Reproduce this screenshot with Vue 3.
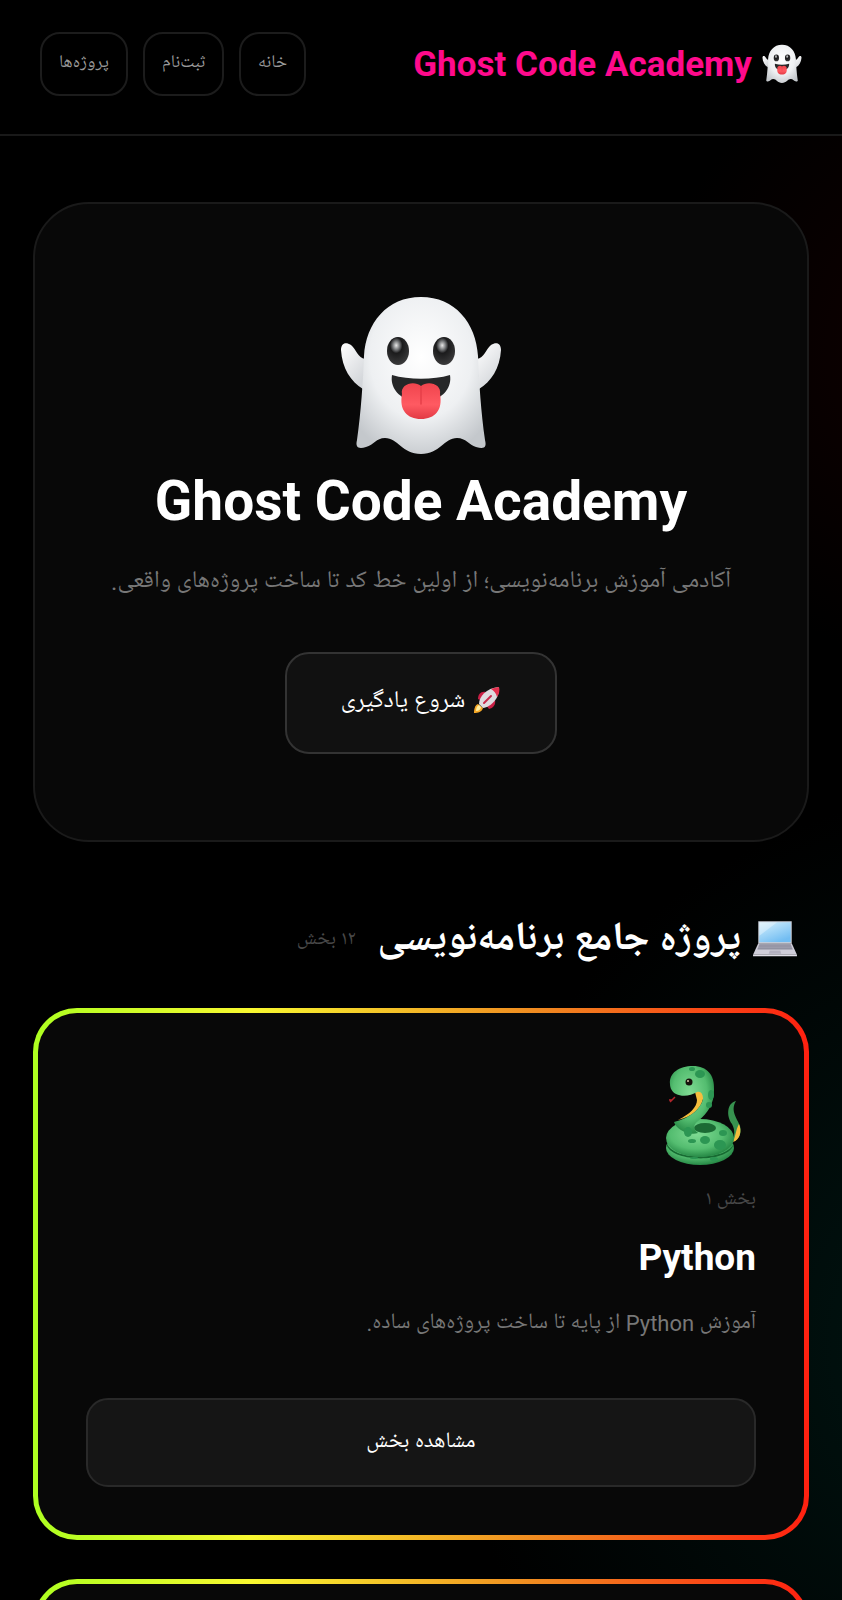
<template>
  <div
    class="page"
    dir="rtl"
    lang="fa"
  >
    <header class="topbar">
      <a
        href="#"
        class="brand"
      >
        <svg
          class="brand-icon"
          viewBox="0 0 164 160"
          aria-hidden="true"
        >
          <use href="#ghost" />
        </svg>
        <span>Ghost Code Academy</span>
      </a>
      <nav class="nav">
        <a
          v-for="link in links"
          :key="link"
          href="#"
          class="nav-link"
        >{{ link }}</a>
      </nav>
    </header>

    <main class="content">
      <section class="hero">
        <svg
          class="hero-icon"
          viewBox="0 0 164 160"
          aria-hidden="true"
        >
          <defs>
            <radialGradient
              id="ghost-body"
              cx="0.5"
              cy="0.38"
              r="0.66"
            >
              <stop
                offset="0"
                stop-color="#ffffff"
              />
              <stop
                offset="0.6"
                stop-color="#eef0f2"
              />
              <stop
                offset="1"
                stop-color="#c4c8cc"
              />
            </radialGradient>
            <linearGradient
              id="ghost-arm"
              x1="0"
              y1="0"
              x2="0.6"
              y2="1"
            >
              <stop
                offset="0"
                stop-color="#ffffff"
              />
              <stop
                offset="1"
                stop-color="#d3d6da"
              />
            </linearGradient>
            <radialGradient
              id="ghost-eye"
              cx="0.42"
              cy="0.3"
              r="0.7"
            >
              <stop
                offset="0"
                stop-color="#e8e8e8"
              />
              <stop
                offset="0.22"
                stop-color="#77797b"
              />
              <stop
                offset="0.4"
                stop-color="#1b1b1c"
              />
              <stop
                offset="1"
                stop-color="#3a3a3b"
              />
            </radialGradient>
            <linearGradient
              id="ghost-tongue"
              x1="0"
              y1="0"
              x2="0"
              y2="1"
            >
              <stop
                offset="0"
                stop-color="#f0444d"
              />
              <stop
                offset="0.6"
                stop-color="#ff5a62"
              />
              <stop
                offset="1"
                stop-color="#e23a44"
              />
            </linearGradient>
          </defs>
          <g id="ghost">
            <path
              d="M26 63C19 62 17 53 12 49C6 45 2 48 2 54C3 72 12 86 24 93Z"
              fill="url(#ghost-arm)"
            />
            <path
              d="M138 63C145 62 147 53 152 49C158 45 162 48 162 54C161 72 152 86 140 93Z"
              fill="url(#ghost-arm)"
            />
            <path
              d="M82 1C48 1 27 27 25 60C24 86 22 116 18 144C16 152 20 153 27 151C35 149 37 142 46 142C59 142 63 158 82 158C101 158 105 142 118 142C127 142 130 149 137 151C145 153 148 152 146 144C142 116 140 86 139 60C137 27 116 1 82 1Z"
              fill="url(#ghost-body)"
            />
            <ellipse
              cx="59"
              cy="55"
              rx="11"
              ry="14"
              fill="url(#ghost-eye)"
            />
            <ellipse
              cx="105"
              cy="55"
              rx="11"
              ry="14"
              fill="url(#ghost-eye)"
            />
            <path
              d="M53 79C70 84 94 84 111 79C113 91 105 101 92 105H72C59 101 51 91 53 79Z"
              fill="#262728"
            />
            <path
              d="M63 98C61 88 75 84 82 90C89 84 103 88 101 98C104 114 96 123 82 123C68 123 60 114 63 98Z"
              fill="url(#ghost-tongue)"
            />
            <path
              d="M82 91V108"
              stroke="#e63f49"
              stroke-width="1.5"
              stroke-linecap="round"
            />
          </g>
        </svg>
        <h1 class="hero-title">
          Ghost Code Academy
        </h1>
        <p class="hero-text">
          آکادمی آموزش برنامه‌نویسی؛ از اولین خط کد تا ساخت پروژه‌های واقعی.
        </p>
        <button
          type="button"
          class="start-button"
        >
          <svg
            class="rocket"
            viewBox="0 0 28 28"
            aria-hidden="true"
          >
            <path
              d="M5 18C2 19 1 23 1 27C5 27 9 26 10 22Z"
              fill="#f7a927"
            />
            <path
              d="M6 19C4 20 3 22 3 25C6 25 8 23 8 21Z"
              fill="#fff0a0"
            />
            <path
              d="M13 6C8 5 5 8 5 13L9 15Z"
              fill="#c91f45"
            />
            <path
              d="M22 14C23 19 20 22 16 23L13 19Z"
              fill="#c91f45"
            />
            <path
              d="M6 18C6 11 13 2 26 1C27 12 18 21 10 22Z"
              fill="#dedbe0"
            />
            <path
              d="M18 3C21 2 24 1 26 1C27 5 26 8 24 11C23 7 21 5 18 3Z"
              fill="#e5304f"
            />
            <path
              d="M11 17L18 10"
              stroke="#c92a4c"
              stroke-width="2"
              stroke-linecap="round"
            />
          </svg>
          <span>شروع یادگیری</span>
        </button>
      </section>

      <section class="projects">
        <div class="section-head">
          <svg
            class="laptop"
            viewBox="0 0 44 36"
            aria-hidden="true"
          >
            <defs>
              <linearGradient
                id="laptop-screen"
                x1="0"
                y1="0"
                x2="0.6"
                y2="1"
              >
                <stop
                  offset="0"
                  stop-color="#d4f0fd"
                />
                <stop
                  offset="1"
                  stop-color="#72bdf2"
                />
              </linearGradient>
            </defs>
            <path
              d="M6 1H38V22H6Z"
              fill="#c9ced8"
            />
            <path
              d="M7 2H37V21H7Z"
              fill="url(#laptop-screen)"
            />
            <path
              d="M7 2H24L7 15Z"
              fill="#ffffff"
              opacity="0.35"
            />
            <path
              d="M6 22H38L43 33H1Z"
              fill="#cfced9"
            />
            <path
              d="M7 23H37L39 28H5Z"
              fill="#8b8c9b"
            />
            <path
              d="M6 24.7H38M5.5 26.4H38.5"
              stroke="#b9b7c6"
              stroke-width="0.5"
            />
            <path
              d="M17 29H27L28 32H16Z"
              fill="#b3b1c0"
            />
            <path
              d="M1 33H43V34.5H1Z"
              fill="#e0dfe8"
            />
          </svg>
          <h2 class="section-title">
            پروژه جامع برنامه‌نویسی
          </h2>
          <span class="section-count">۱۲ بخش</span>
        </div>

        <div class="cards">
          <article
            v-for="course in courses"
            :key="course.name"
            class="card"
          >
            <svg
              class="card-icon"
              viewBox="0 0 76 102"
              aria-hidden="true"
            >
              <defs>
                <radialGradient
                  id="snake-skin"
                  cx="0.45"
                  cy="0.4"
                  r="0.65"
                >
                  <stop
                    offset="0"
                    stop-color="#7fdb93"
                  />
                  <stop
                    offset="0.6"
                    stop-color="#54bd70"
                  />
                  <stop
                    offset="1"
                    stop-color="#1c7d3c"
                  />
                </radialGradient>
              </defs>
              <path
                d="M9 32L6 35L3 35M6 35L4 37"
                fill="none"
                stroke="#b3262c"
                stroke-width="1.5"
              />
              <path
                d="M70 36C61 38 60 51 66 59C69 65 69 70 66 76C73 76 76 68 74 61C71 53 64 46 70 36Z"
                fill="#37924f"
              />
              <path
                d="M73 59C76 66 74 75 67 77C70 70 70 64 73 59Z"
                fill="#f5bd3d"
              />
              <ellipse
                cx="34"
                cy="83"
                rx="34"
                ry="17"
                fill="url(#snake-skin)"
              />
              <path
                d="M1 78C6 96 62 96 68 78L67 81C60 98 8 97 1 81Z"
                fill="#176b32"
              />
              <ellipse
                cx="34"
                cy="73"
                rx="34"
                ry="19"
                fill="url(#snake-skin)"
              />
              <ellipse
                cx="39"
                cy="63"
                rx="11"
                ry="5"
                fill="#1b6a34"
              />
              <path
                d="M29 27C35 23 38 28 37 34C35 43 26 52 12 55C24 49 31 42 31 35Z"
                fill="#f5bd3d"
              />
              <path
                d="M4 19C3 8 13 1 27 1C41 1 49 10 48 25C48 39 42 48 32 56C27 60 27 64 32 68C22 71 10 64 8 57C25 53 35 43 37 34C37 29 35 26 31 27C25 31 16 32 10 29C6 27 4 23 4 19Z"
                fill="url(#snake-skin)"
              />
              <g fill="#2c9653">
                <ellipse
                  cx="34"
                  cy="9"
                  rx="5"
                  ry="4"
                />
                <ellipse
                  cx="26"
                  cy="4"
                  rx="3"
                  ry="2"
                />
                <ellipse
                  cx="45"
                  cy="30"
                  rx="3"
                  ry="5"
                />
                <ellipse
                  cx="43"
                  cy="40"
                  rx="3"
                  ry="3"
                />
                <ellipse
                  cx="22"
                  cy="67"
                  rx="4"
                  ry="5"
                />
                <ellipse
                  cx="39"
                  cy="75"
                  rx="5"
                  ry="4"
                />
                <ellipse
                  cx="57"
                  cy="68"
                  rx="4"
                  ry="3"
                />
                <ellipse
                  cx="54"
                  cy="80"
                  rx="6"
                  ry="5"
                />
                <ellipse
                  cx="26"
                  cy="76"
                  rx="4"
                  ry="2"
                />
                <ellipse
                  cx="48"
                  cy="94"
                  rx="4"
                  ry="2"
                />
                <ellipse
                  cx="28"
                  cy="93"
                  rx="4"
                  ry="1"
                />
              </g>
              <circle
                cx="23"
                cy="17"
                r="3.5"
                fill="#16120c"
              />
              <circle
                cx="22"
                cy="16"
                r="1"
                fill="#d6c9a8"
              />
            </svg>
            <span class="card-step">{{ course.step }}</span>
            <h3 class="card-title">
              {{ course.name }}
            </h3>
            <p class="card-text">
              {{ course.text }}
            </p>
            <button
              type="button"
              class="card-button"
            >
              مشاهده بخش
            </button>
          </article>
        </div>
      </section>
    </main>
  </div>
</template>

<script setup>
const links = ["خانه", "ثبت‌نام", "پروژه‌ها"];

const courses = [
  {
    name: "Python",
    step: "بخش ۱",
    text: "آموزش Python از پایه تا ساخت پروژه‌های ساده.",
  },
  {
    name: "JavaScript",
    step: "بخش ۲",
    text: "آموزش JavaScript از پایه تا ساخت پروژه‌های ساده.",
  },
];
</script>

<style>
body {
  margin: 0;
  background: #000;
}
</style>

<style scoped>
.page {
  min-height: 100vh;
  color: #fff;
  font-family: Roboto, "Noto Naskh Arabic UI", "Noto Naskh Arabic", "DejaVu Sans", sans-serif;
  background:
    radial-gradient(circle at 115% 22%, rgba(40, 0, 0, 0.4) 0, transparent 320px) fixed,
    radial-gradient(circle at 120% 84%, #001613 0, #000 560px) fixed;
}

.page * {
  box-sizing: border-box;
}

.topbar {
  display: flex;
  align-items: flex-start;
  justify-content: space-between;
  padding: 32px 40px 38px;
  border-bottom: 2px solid #191919;
  background: #000;
}

.brand {
  display: flex;
  align-items: center;
  gap: 10px;
  height: 64px;
  color: #ff0a8c;
  font-size: 35px;
  font-weight: 700;
  text-decoration: none;
  white-space: nowrap;
}

.brand-icon {
  width: 40px;
  height: 40px;
}

.nav {
  display: flex;
  gap: 15px;
}

.nav-link {
  height: 64px;
  padding: 0 17px;
  border: 2px solid #1c1c1c;
  border-radius: 20px;
  color: #999;
  font-size: 18px;
  line-height: 58px;
  text-decoration: none;
  white-space: nowrap;
}

.content {
  padding: 66px 33px 40px;
}

.hero {
  display: flex;
  flex-direction: column;
  align-items: center;
  padding: 92px 40px 86px;
  border: 2px solid #1a1a1a;
  border-radius: 56px;
  background: #080808;
}

.hero-icon {
  width: 164px;
  height: 160px;
}

.hero-title {
  margin: 11px 0 0;
  font-size: 55px;
  line-height: 68px;
}

.hero-text {
  margin: 27px 0 0;
  color: #777;
  font-size: 24px;
  line-height: 40px;
  white-space: nowrap;
}

.start-button {
  display: flex;
  align-items: center;
  gap: 8px;
  height: 102px;
  margin-top: 50px;
  padding: 0 54px 6px;
  border: 2px solid #333;
  border-radius: 24px;
  background: #111;
  color: #fff;
  font-family: inherit;
  font-size: 24px;
}

.rocket {
  width: 28px;
  height: 28px;
}

.section-head {
  display: flex;
  align-items: center;
  gap: 11px;
  height: 64px;
  margin: 65px 11px 37px;
}

.laptop {
  width: 46px;
  height: 38px;
}

.section-title {
  margin: 0;
  font-size: 40px;
  white-space: nowrap;
}

.section-count {
  margin-right: 11px;
  color: #484848;
  font-size: 20px;
  white-space: nowrap;
}

.cards {
  display: flex;
  flex-direction: column;
  gap: 39px;
}

.card {
  display: flex;
  flex-direction: column;
  align-items: flex-start;
  padding: 52px 48px 48px;
  border: 5px solid transparent;
  border-radius: 44px;
  background:
    linear-gradient(#080808, #080808) padding-box,
    linear-gradient(90deg, #adff20, #f8f830 28%, #f08a20 65%, #ff2010) border-box;
}

.card-icon {
  width: 76px;
  height: 102px;
  margin-right: 14px;
}

.card-step {
  margin-top: 17px;
  color: #484848;
  font-size: 20px;
  line-height: 32px;
}

.card-title {
  margin: 18px 0 0;
  font-size: 37px;
  line-height: 48px;
}

.card-text {
  margin: 22px 0 0;
  color: #777;
  font-size: 22px;
  line-height: 40px;
}

.card-button {
  width: 100%;
  height: 89px;
  margin-top: 54px;
  padding: 0 0 4px;
  border: 2px solid #292929;
  border-radius: 22px;
  background: #151515;
  color: #fff;
  font-family: inherit;
  font-size: 22px;
}
</style>
